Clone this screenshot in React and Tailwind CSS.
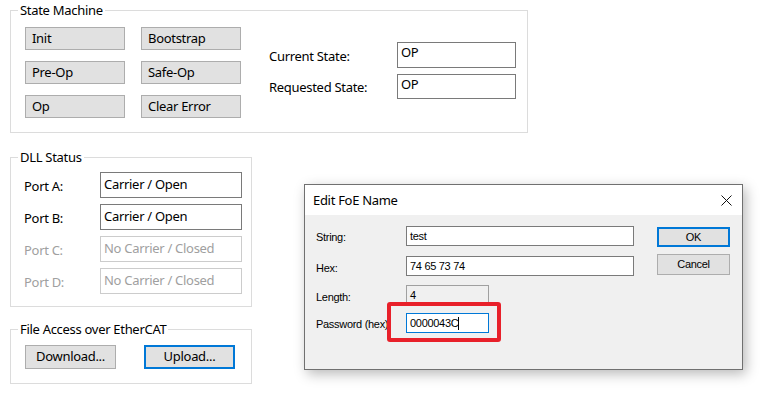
import React from 'react';

const font = { fontFamily: '"Noto Sans", "Liberation Sans", sans-serif' };

const Group = ({ title, className, children }) => (
    <div className={'relative border border-[#dcdcdc] ' + className}>
        <span className='absolute left-[7px] top-[-10px] bg-white px-[2px] leading-[18px] text-black'>{title}</span>
        {children}
    </div>
);

const Btn = ({ children, focus, className }) => (
    <div className={(focus ? 'border-2 border-[#0078d7] ' : 'border border-[#adadad] ') + 'bg-[#e1e1e1] flex items-center ' + className}>
        {children}
    </div>
);

const StateBtn = ({ children }) => (
    <Btn className='w-[100px] h-[23px] pl-[6px]'>{children}</Btn>
);

const Field = ({ children, disabled }) => (
    <div className={'w-[142px] h-[26px] px-[3px] pt-[2px] ' + (disabled ? 'border border-[#cccccc] text-[#a0a0a0]' : 'border border-[#7a7a7a] text-black')}>
        {children}
    </div>
);

const DlgInput = ({ children, w = 'w-[228px]', variant }) => {
    let cls = 'border border-[#7a7a7a] bg-white';
    if (variant === 'ro') cls = 'border border-[#a0a0a0] bg-[#f0f0f0]';
    if (variant === 'focus') cls = 'border border-[#0078d7] bg-white';
    return (
        <div className={w + ' h-[20px] flex items-center pl-[3px] ' + cls}>{children}</div>
    );
};

export default function App() {
    const ports = [
        { name: 'Port A:', value: 'Carrier / Open' },
        { name: 'Port B:', value: 'Carrier / Open' },
        { name: 'Port C:', value: 'No Carrier / Closed', disabled: true },
        { name: 'Port D:', value: 'No Carrier / Closed', disabled: true },
    ];

    return (
        <div className='relative w-[775px] h-[403px] bg-white overflow-hidden text-[13px] tracking-[-0.3px] text-black' style={font}>
            <div className='pl-[10px] pt-[10px] flex flex-col'>
                {/* state machine */}
                <Group title='State Machine' className='w-[518px] h-[123px]'>
                    <div className='flex pl-[14px] pt-[16px]'>
                        <div className='grid grid-cols-[100px_100px] gap-x-[16px] gap-y-[11px]'>
                            <StateBtn>Init</StateBtn>
                            <StateBtn>Bootstrap</StateBtn>
                            <StateBtn>Pre-Op</StateBtn>
                            <StateBtn>Safe-Op</StateBtn>
                            <StateBtn>Op</StateBtn>
                            <StateBtn>Clear Error</StateBtn>
                        </div>
                        <div className='ml-[28px] mt-[15px] flex flex-col gap-[6px]'>
                            <div className='flex items-center'>
                                <span className='w-[128px] pt-[4px]'>Current State:</span>
                                <div className='w-[119px] h-[26px] border border-[#7a7a7a] px-[3px]'>OP</div>
                            </div>
                            <div className='flex items-center'>
                                <span className='w-[128px] pt-[2px]'>Requested State:</span>
                                <div className='w-[119px] h-[25px] border border-[#7a7a7a] px-[3px]'>OP</div>
                            </div>
                        </div>
                    </div>
                </Group>

                {/* dll status */}
                <Group title='DLL Status' className='mt-[24px] w-[242px] h-[150px]'>
                    <div className='flex flex-col gap-[6px] pl-[13px] pt-[14px]'>
                        {ports.map(p => (
                            <div key={p.name} className='flex items-center'>
                                <span className={'w-[76px] pt-[3px] ' + (p.disabled ? 'text-[#a0a0a0]' : '')}>{p.name}</span>
                                <Field disabled={p.disabled}>{p.value}</Field>
                            </div>
                        ))}
                    </div>
                </Group>

                {/* file access */}
                <Group title='File Access over EtherCAT' className='mt-[22px] w-[242px] h-[55px]'>
                    <div className='flex gap-[28px] pl-[14px] pt-[15px]'>
                        <Btn className='w-[91px] h-[24px] justify-center'>Download...</Btn>
                        <Btn focus className='w-[91px] h-[24px] justify-center'>Upload...</Btn>
                    </div>
                </Group>
            </div>

            {/* dialog window */}
            <div className='absolute left-[304px] top-[184px] w-[439px] h-[186px] border border-[#707070] bg-[#f0f0f0] flex flex-col shadow-[3px_4px_12px_rgba(0,0,0,0.28)]'>
                <div className='h-[30px] bg-white flex items-center justify-between pl-[8px] pr-[10px] shrink-0'>
                    <span className='text-[13px] pt-[1px]'>Edit FoE Name</span>
                    <svg width='11' height='11' viewBox='0 0 11 11'>
                        <path d='M0.5 0.5 L10.5 10.5 M10.5 0.5 L0.5 10.5' stroke='#111' strokeWidth='1' fill='none' />
                    </svg>
                </div>
                <div className='relative flex-1 flex pt-[11px] text-[11px] tracking-[-0.3px]' style={{ fontFamily: '"Liberation Sans", Arial, sans-serif' }}>
                    <div className='flex flex-col pl-[11px] w-[340px]'>
                        <div className='flex items-center h-[20px]'>
                            <span className='w-[90px] pt-[2px]'>String:</span>
                            <DlgInput>test</DlgInput>
                        </div>
                        <div className='flex items-center h-[20px] mt-[10px]'>
                            <span className='w-[90px] pt-[4px]'>Hex:</span>
                            <DlgInput>74 65 73 74</DlgInput>
                        </div>
                        <div className='flex items-center h-[20px] mt-[9px]'>
                            <span className='w-[90px] pt-[4px]'>Length:</span>
                            <DlgInput w='w-[83px]' variant='ro'>4</DlgInput>
                        </div>
                        <div className='flex items-center h-[20px] mt-[8px]'>
                            <span className='w-[90px] pt-[2px] whitespace-nowrap'>Password (hex)</span>
                            <DlgInput w='w-[83px]' variant='focus'>
                                0000043C<span className='inline-block w-[1px] h-[13px] bg-black'></span>
                            </DlgInput>
                        </div>
                    </div>
                    <div className='flex flex-col ml-[12px] pt-[1px] gap-[7px]'>
                        <Btn focus className='w-[73px] h-[20px] justify-center'>OK</Btn>
                        <Btn className='w-[73px] h-[21px] justify-center'>Cancel</Btn>
                    </div>
                    {/* highlight box drawn over the password field */}
                    <div className='absolute left-[82px] top-[87px] w-[114px] h-[40px] border-4 border-[#e8202a] rounded-[3px] pointer-events-none'></div>
                </div>
            </div>
        </div>
    );
}
